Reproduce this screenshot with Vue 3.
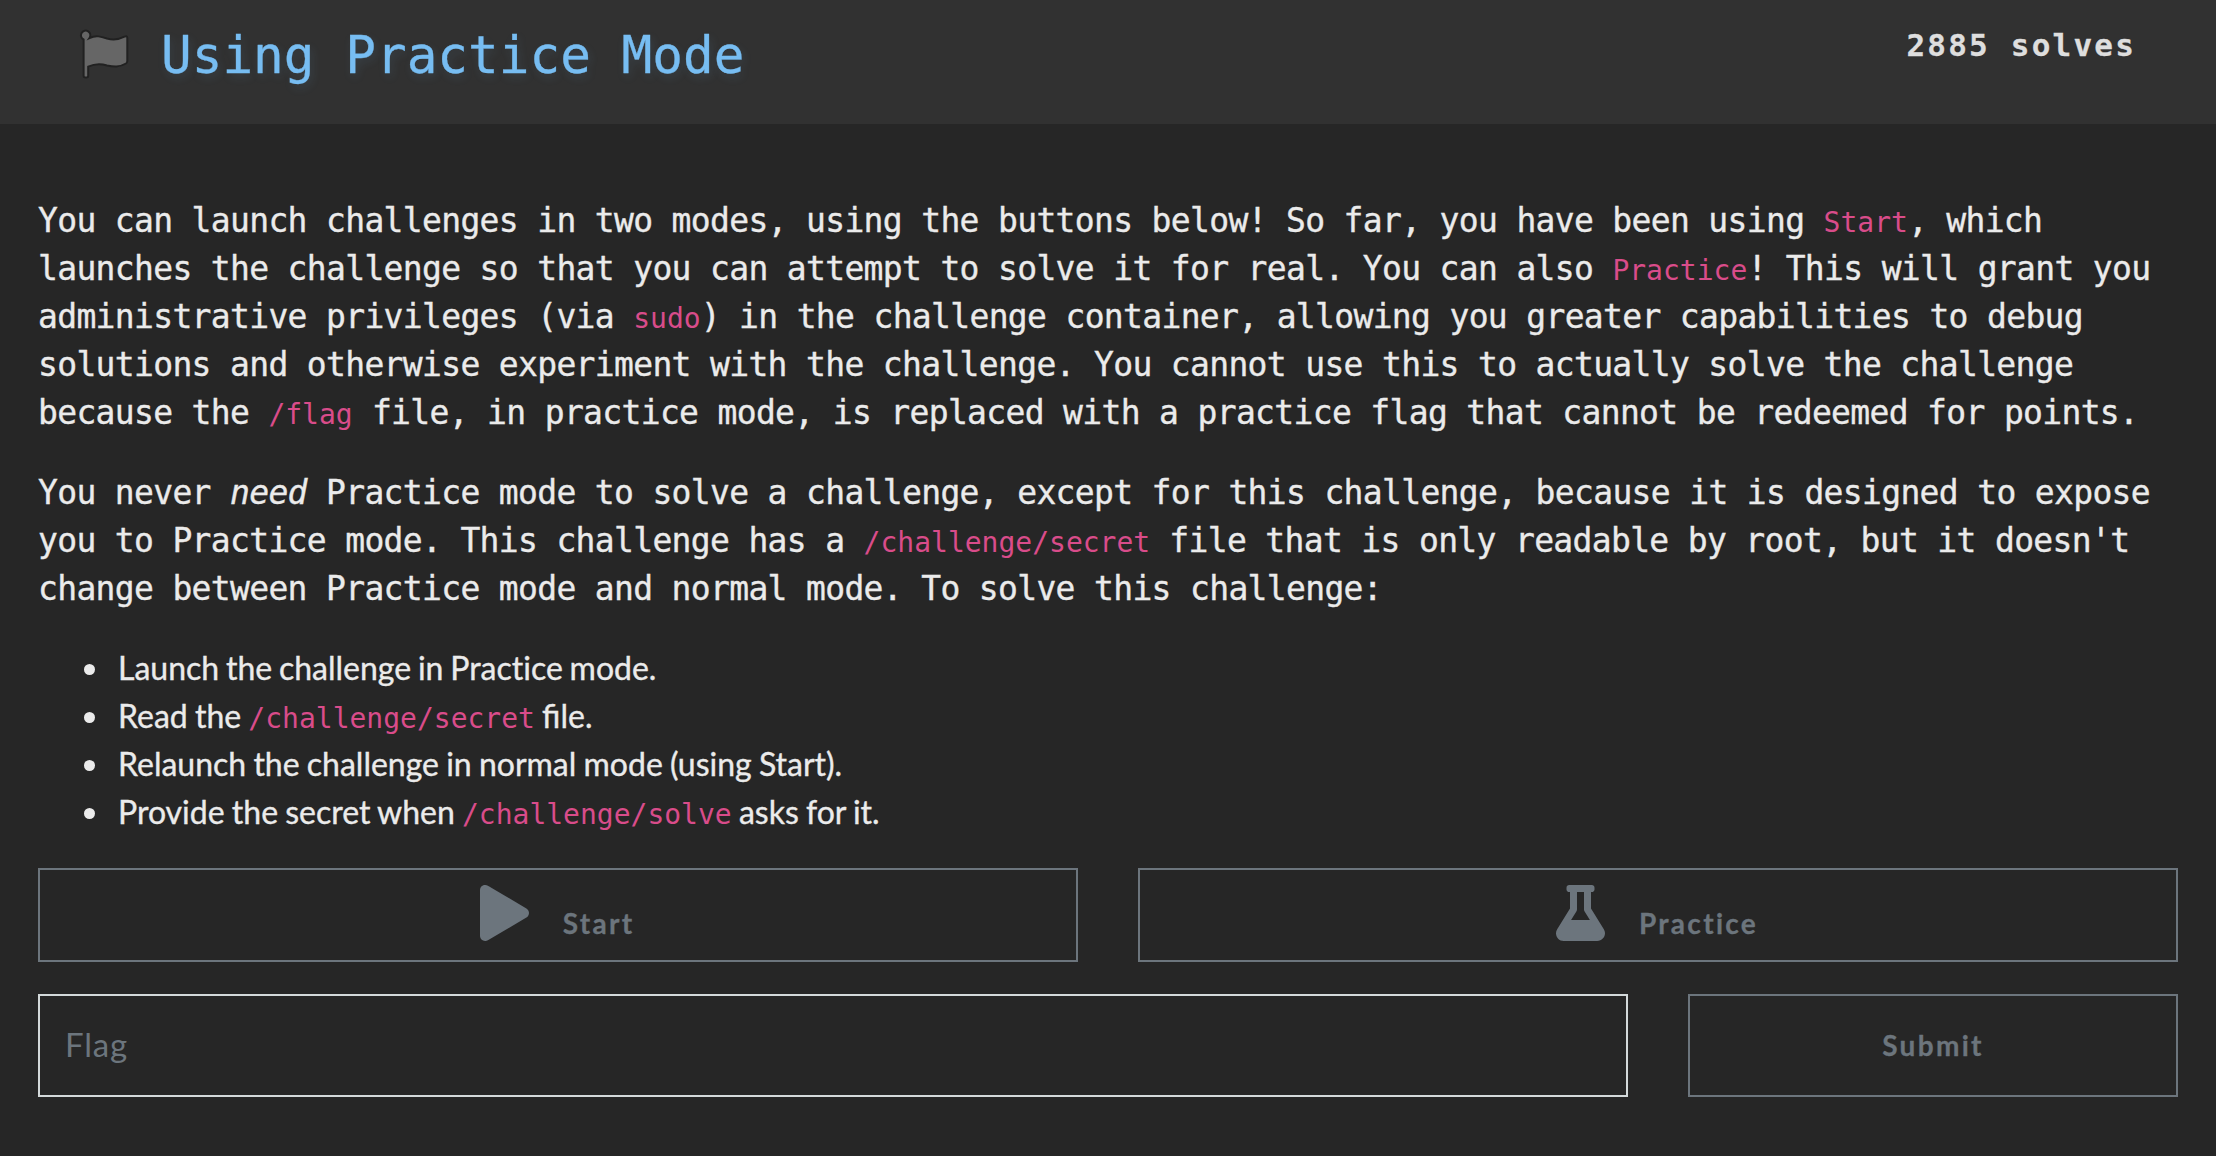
<script setup>
const steps = [
  [{ t: 'Launch the challenge in Practice mode.', plain: true }],
  [{ t: 'Read the ' }, { t: '/challenge/secret', code: true }, { t: ' file.' }],
  [{ t: 'Relaunch the challenge in normal mode (using Start).' }],
  [{ t: 'Provide the secret when ' }, { t: '/challenge/solve', code: true }, { t: ' asks for it.' }],
]
</script>

<template>
  <div class="page">
    <header class="head">
      <h4 class="title">
        <svg class="flag" viewBox="0 0 52 54" aria-hidden="true">
          <path d="M10.500 10 C17 7 22 8.500 28 10.500 C35 12.500 40 11.500 45.500 8.700 Q48.300 7.300 48.300 10 V33 Q48.300 34.500 47 35.500 C40 39.500 35 39 28 37.500 C20 35 15 36 9.200 38.700 V48 Q9.200 49.500 7 49.500 Q4.600 49.500 4.600 48 V11.500 A4.700 4.700 0 1 1 10.500 10 Z" />
        </svg>
        <span>Using Practice Mode</span>
      </h4>
      <span class="solves">2885 solves</span>
    </header>
    <main class="body">
      <p>You can launch challenges in two modes, using the buttons below! So far, you have been using <code>Start</code>, which<br>launches the challenge so that you can attempt to solve it for real. You can also <code>Practice</code>! This will grant you<br>administrative privileges (via <code>sudo</code>) in the challenge container, allowing you greater capabilities to debug<br>solutions and otherwise experiment with the challenge. You cannot use this to actually solve the challenge<br>because the <code>/flag</code> file, in practice mode, is replaced with a practice flag that cannot be redeemed for points.</p>
      <p>You never <em>need</em> Practice mode to solve a challenge, except for this challenge, because it is designed to expose<br>you to Practice mode. This challenge has a <code>/challenge/secret</code> file that is only readable by root, but it doesn't<br>change between Practice mode and normal mode. To solve this challenge:</p>
      <ul>
        <li v-for="(step, i) in steps" :key="i"><template v-for="(part, j) in step" :key="j"><code v-if="part.code">{{ part.t }}</code><span v-else :class="{ plain: part.plain }">{{ part.t }}</span></template></li>
      </ul>
      <div class="row launch">
        <button class="btn" type="button">
          <svg viewBox="0 0 448 512" aria-hidden="true"><path d="M424.4 214.7L72.4 6.600C43.800-10.300 0 6.100 0 47.900V464c0 37.500 40.700 60.100 72.400 41.300l352-208c31.400-18.500 31.500-64.100 0-82.600z" /></svg>
          <span>Start</span>
        </button>
        <button class="btn" type="button">
          <svg viewBox="0 0 448 512" aria-hidden="true"><path d="M437.200 403.500L320 215V64h8c13.300 0 24-10.700 24-24V24c0-13.300-10.700-24-24-24H120c-13.300 0-24 10.700-24 24v16c0 13.300 10.700 24 24 24h8v151L10.800 403.500C-18.500 450.600 15.300 512 70.900 512h306.200c55.700 0 89.400-61.500 60.100-108.500zM137.900 320l48.200-77.600c3.700-5.200 5.800-11.600 5.800-18.400V64h64v160c0 6.900 2.200 13.200 5.800 18.400l48.200 77.600h-172z" /></svg>
          <span>Practice</span>
        </button>
      </div>
      <div class="row answer">
        <input class="field" type="text" placeholder="Flag">
        <button class="btn submit" type="button">Submit</button>
      </div>
    </main>
  </div>
</template>

<style>
body {
  background: #262626;
}
</style>

<style scoped>
.page {
  box-sizing: border-box;
  width: 100%;
  height: 1156px;
  overflow: hidden;
  background: #262626;
  color: #ebebeb;
  font-family: "Lato", sans-serif;
  font-size: 32px;
  line-height: 48px;
}
.head {
  box-sizing: border-box;
  display: flex;
  justify-content: space-between;
  align-items: flex-start;
  height: 124px;
  padding: 25px 80px 0 78px;
  background: #313131;
  font-family: "DejaVu Sans Mono", monospace;
}
.title {
  display: flex;
  align-items: flex-start;
  margin: 0;
  color: #77bdf2;
  font-size: 51px;
  font-weight: 400;
  line-height: 60px;
  text-shadow: 2px 4px 10px rgba(119, 189, 242, 0.13);
  -webkit-text-stroke: 0.3px #77bdf2;
}
.title span {
  margin-top: 1px;
}
.flag {
  width: 52px;
  height: 54px;
  margin: 3px 30px 0 1px;
  fill: #666;
  stroke: #212121;
  stroke-width: 2;
}
.solves {
  color: #dedede;
  font-size: 31px;
  font-weight: 700;
  letter-spacing: 2.200px;
  line-height: 40px;
  -webkit-text-stroke: 0.300px #dedede;
}
.body {
  padding: 73px 38px 0;
}
p {
  margin: 0 0 32px;
  font-family: "DejaVu Sans Mono", monospace;
  font-size: 33px;
  letter-spacing: -0.668px;
  white-space: nowrap;
  -webkit-text-stroke: 0.350px currentColor;
}
code {
  color: #d94c8a;
  font-family: "DejaVu Sans Mono", monospace;
  font-size: 28px;
  letter-spacing: 0;
  line-height: 1;
  -webkit-text-stroke: 0;
}
p:last-of-type {
  margin-bottom: 31px;
}
ul {
  margin: 0 0 32px;
  padding-left: 74px;
  word-spacing: -1px;
  -webkit-text-stroke: 0.350px currentColor;
}
li {
  padding-left: 6px;
}
.plain {
  word-spacing: -1.400px;
  font-variant-ligatures: none;
}
.row {
  display: flex;
  gap: 60px;
}
.btn {
  box-sizing: border-box;
  display: flex;
  flex: 1;
  justify-content: center;
  align-items: center;
  padding: 0;
  border: 2px solid #6c757d;
  background: transparent;
  color: #6c757d;
  font: 700 28px/42px "Lato", sans-serif;
  letter-spacing: 2.300px;
  -webkit-text-stroke: 0.300px #6c757d;
}
.launch .btn {
  height: 94px;
  padding-right: 2px;
}
.btn svg {
  width: 49px;
  height: 56px;
  margin: 0 34px 4px 0;
  fill: #6c757d;
}
.launch span {
  margin-top: 16px;
}
.answer {
  margin-top: 32px;
}
.field {
  box-sizing: border-box;
  width: 1590px;
  height: 103px;
  padding: 0 25px 3px;
  border: 2px solid #d3d9da;
  border-radius: 0;
  outline: none;
  background: transparent;
  color: #ebebeb;
  font: 400 33px/48px "Lato", sans-serif;
  letter-spacing: 0.800px;
}
.field::placeholder {
  color: #6c757d;
  opacity: 1;
}
.submit {
  height: 103px;
  padding-bottom: 2px;
}
</style>
